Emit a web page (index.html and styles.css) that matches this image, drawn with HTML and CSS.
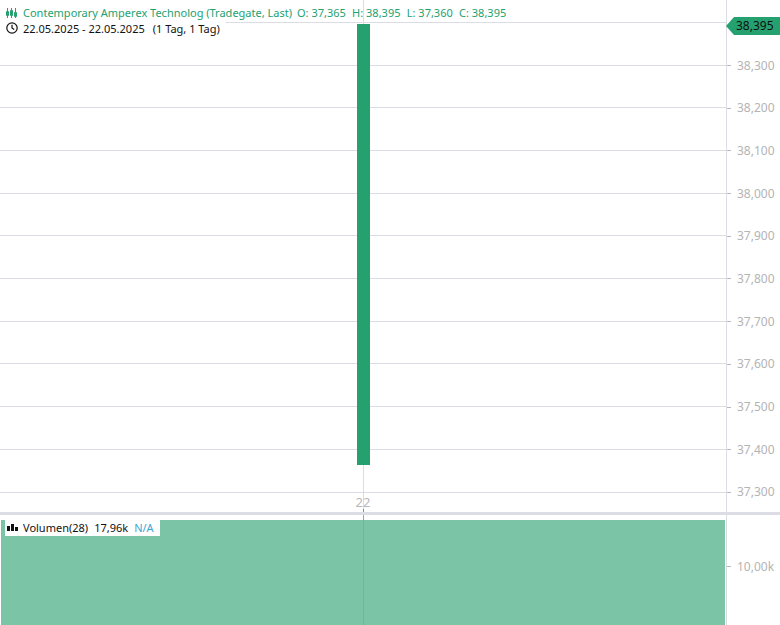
FILE: index.html
```html
<!DOCTYPE html>
<html lang="de">
<head>
<meta charset="utf-8">
<title>Chart</title>
<link rel="stylesheet" href="styles.css">
</head>
<body>
<main class="chart">
  <section class="pane pane-price">
    <div class="plot">
      <div class="grid">
        <div class="gridline"></div><div class="gridline"></div><div class="gridline"></div><div class="gridline"></div>
        <div class="gridline"></div><div class="gridline"></div><div class="gridline"></div><div class="gridline"></div>
        <div class="gridline"></div><div class="gridline"></div><div class="gridline"></div><div class="gridline"></div>
      </div>
      <div class="crossline"></div>
      <div class="candle"></div>
      <div class="time-label">22</div>
      <div class="time-tick"></div>
      <div class="legend">
        <div class="legend-row legend-row-main">
          <svg class="icon" width="14" height="14" viewBox="0 0 14 14" fill="none" stroke="#24a16f" stroke-width="1">
            <path d="M2.5 3v10M1.5 6.5h2v4h-2zM6.5 3v10M5.5 5.5h2v5h-2zM10.5 3v10M9.5 7.5h2v4h-2z"/>
          </svg>
          <span class="legend-name">Contemporary Amperex Technolog (Tradegate, Last)</span>
          <span class="legend-ohlc">O: 37,365</span>
          <span class="legend-ohlc">H: 38,395</span>
          <span class="legend-ohlc">L: 37,360</span>
          <span class="legend-ohlc">C: 38,395</span>
        </div>
        <div class="legend-row legend-row-date">
          <svg class="icon" width="14" height="14" viewBox="0 0 14 14" fill="none" stroke="#111" stroke-width="1.2">
            <circle cx="7" cy="7" r="5.2"/><path d="M7 3.8V7l2.2 1.6"/>
          </svg>
          <span>22.05.2025 - 22.05.2025</span>
          <span class="legend-range">(1 Tag, 1 Tag)</span>
        </div>
      </div>
    </div>
    <div class="axis">
      <div class="tick tick-current"><span class="price-tag">38,395</span></div>
      <div class="tick"><span class="tick-label">38,300</span></div>
      <div class="tick"><span class="tick-label">38,200</span></div>
      <div class="tick"><span class="tick-label">38,100</span></div>
      <div class="tick"><span class="tick-label">38,000</span></div>
      <div class="tick"><span class="tick-label">37,900</span></div>
      <div class="tick"><span class="tick-label">37,800</span></div>
      <div class="tick"><span class="tick-label">37,700</span></div>
      <div class="tick"><span class="tick-label">37,600</span></div>
      <div class="tick"><span class="tick-label">37,500</span></div>
      <div class="tick"><span class="tick-label">37,400</span></div>
      <div class="tick"><span class="tick-label">37,300</span></div>
    </div>
  </section>
  <div class="separator"></div>
  <section class="pane pane-volume">
    <div class="plot plot-volume">
      <div class="volume-bar"></div>
      <div class="crossline crossline-volume"></div>
      <div class="volume-legend">
        <svg class="icon" width="12" height="12" viewBox="0 0 12 12" fill="#111">
          <path d="M0 6h3v5H0zM4 4h3v7H4zM8 7h3v4H8z"/>
        </svg>
        <span>Volumen(28)</span>
        <span>17,96k</span>
        <span class="na">N/A</span>
      </div>
    </div>
    <div class="axis axis-volume">
      <div class="tick tick-volume"><span class="tick-label">10,00k</span></div>
    </div>
  </section>
</main>
</body>
</html>
```
FILE: styles.css
```css
* { box-sizing: border-box; }
html, body { margin: 0; padding: 0; background: #fff; overflow: hidden; }
body { width: 780px; height: 625px; font-family: "Noto Sans", sans-serif; font-size: 11px; color: #111; }
.chart { display: flex; flex-direction: column; width: 780px; height: 625px; }
.pane { display: flex; }
.pane-price { height: 512px; }
.pane-volume { height: 110px; }
.separator { height: 3px; background: #dcdce4; }
.plot { position: relative; width: 726px; overflow: hidden; }
.grid { display: flex; flex-direction: column; padding-top: 21.97px; }
.gridline { height: 42.7px; border-top: 1px solid #dcdce4; }
.crossline { position: absolute; top: 0; bottom: 0; left: 363px; width: 1px; background: #dcdce4; }
.crossline-volume { background: #6fb89a; }
.candle { position: absolute; left: 357px; top: 24px; width: 13px; height: 441px; background: #24a16f; }
.time-label { position: absolute; left: 350px; top: 494px; width: 26px; text-align: center; font-size: 13px; line-height: 17px; color: #b8b8b8; }
.time-tick { position: absolute; left: 363px; top: 509px; width: 1px; height: 3px; background: #8a8a8a; }
.legend { position: absolute; left: 0; top: 4px; }
.legend-row { display: flex; align-items: center; height: 16px; white-space: nowrap; }
.legend-row .icon { margin: 0 4px 0 5px; }
.legend-row-main { color: #24a16f; gap: 6.3px; }
.legend-row-main .icon { margin-right: -2.3px; }
.legend-name { margin-right: -1.3px; }
.legend-row-date { background: #fff; width: 226px; }
.legend-range { margin-left: 8px; }
.axis { position: relative; width: 54px; border-left: 1px solid #dcdce4; padding-top: 0.97px; font-size: 12px; }
.tick { height: 42.7px; display: flex; align-items: center; position: relative; padding-left: 10px; }
.tick::before { content: ""; width: 4px; height: 1px; background: #b8b8b8; position: absolute; left: 0; top: 50%; }
.tick-current::before { display: none; }
.tick-label { color: #b4b4b4; line-height: 17px; }
.price-tag { position: absolute; left: -1px; top: 16px; height: 18px; width: 54px; padding-left: 10px; background: #24a16f; color: #111; line-height: 18px; clip-path: polygon(0 50%, 8px 0, 100% 0, 100% 100%, 8px 100%); }
.plot-volume { padding: 5px 1px 0; }
.volume-bar { height: 105px; width: 724px; background: #7bc5a6; }
.volume-legend { position: absolute; left: 5px; top: 5px; width: 155px; height: 16px; background: #fff; display: flex; align-items: flex-start; gap: 6px; padding-left: 2px; line-height: 15px; white-space: nowrap; }
.volume-legend .icon { margin: 0 -2px 0 0; }
.na { color: #3aa6d8; }
.axis-volume { padding-top: 0; }
.tick-volume { margin-top: 30px; }
```
